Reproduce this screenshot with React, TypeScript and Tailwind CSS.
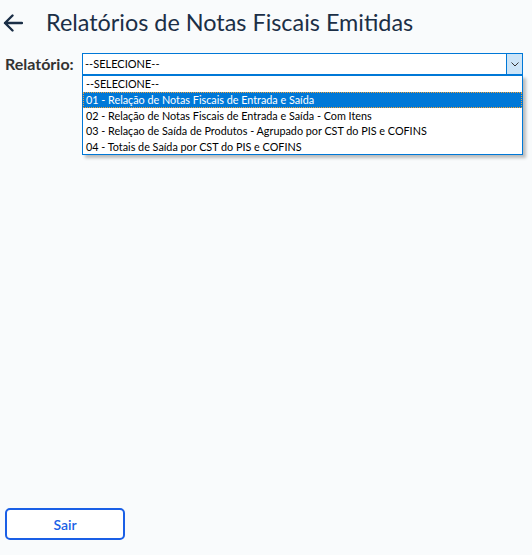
import React from "react";

const options = [
  "--SELECIONE--",
  "01 - Relação de Notas Fiscais de Entrada e Saída",
  "02 - Relação de Notas Fiscais de Entrada e Saída - Com Itens",
  "03 - Relaçao de Saída de Produtos - Agrupado por CST do PIS e COFINS",
  "04 - Totais de Saída por CST do PIS e COFINS",
];

export default function App() {
  return (
    <div
      className="w-[532px] h-[555px] bg-[#f9fbfc] flex flex-col text-[#1b2f47]"
      style={{ fontFamily: "Lato, 'Open Sans', sans-serif" }}
    >
      <div className="flex items-center h-[45px] pl-[3px]">
        <svg width="20" height="18" viewBox="0 0 20 18" className="mt-[1px]">
          <path d="M19 9H2M9.5 1.5L2 9l7.5 7.5" stroke="#1b2f47" strokeWidth="2.4" fill="none" strokeLinecap="round" strokeLinejoin="round" />
        </svg>
        <h1 className="ml-[23px] text-[23.4px] leading-none font-normal">Relatórios de Notas Fiscais Emitidas</h1>
      </div>
      <div className="flex items-start mt-[8px] pl-[5px]">
        <label className="text-[16px] font-bold text-[#333] leading-[22px] w-[77px]">Relatório:</label>
        <div className="relative w-[441px]">
          <div className="h-[22px] border border-[#0078d7] bg-white flex items-center">
            <span className="flex-1 pl-[2px] text-[11px] text-black">--SELECIONE--</span>
            <div className="w-[16px] h-[20px] bg-[#cce4f7] border-l border-[#0078d7] flex items-center justify-center">
              <svg width="8" height="5" viewBox="0 0 8 5">
                <path d="M0.5 0.5L4 4L7.5 0.5" stroke="#333" strokeWidth="1" fill="none" />
              </svg>
            </div>
          </div>
          <div className="absolute left-0 top-[22px] w-[441px] bg-white border border-[#0078d7] shadow-[3px_3px_3px_rgba(0,0,0,0.25)] flex flex-col">
            {options.map((o, i) => (
              <div
                key={i}
                className={
                  i === 1
                    ? "h-[16px] leading-[14px] pl-[2px] text-[10.8px] text-white bg-[#0078d7] border border-dotted border-[#f2a33a]"
                    : "h-[15.6px] leading-[15.6px] pl-[3px] text-[10.8px] text-black"
                }
              >
                {o}
              </div>
            ))}
          </div>
        </div>
      </div>
      <div className="flex-1" />
      <div className="pl-[5px] pb-[15px]">
        <button className="w-[120px] h-[32px] border-2 border-[#1a5fe6] rounded-[5px] text-[#1a5fe6] text-[14px] font-semibold bg-white">
          Sair
        </button>
      </div>
    </div>
  );
}
